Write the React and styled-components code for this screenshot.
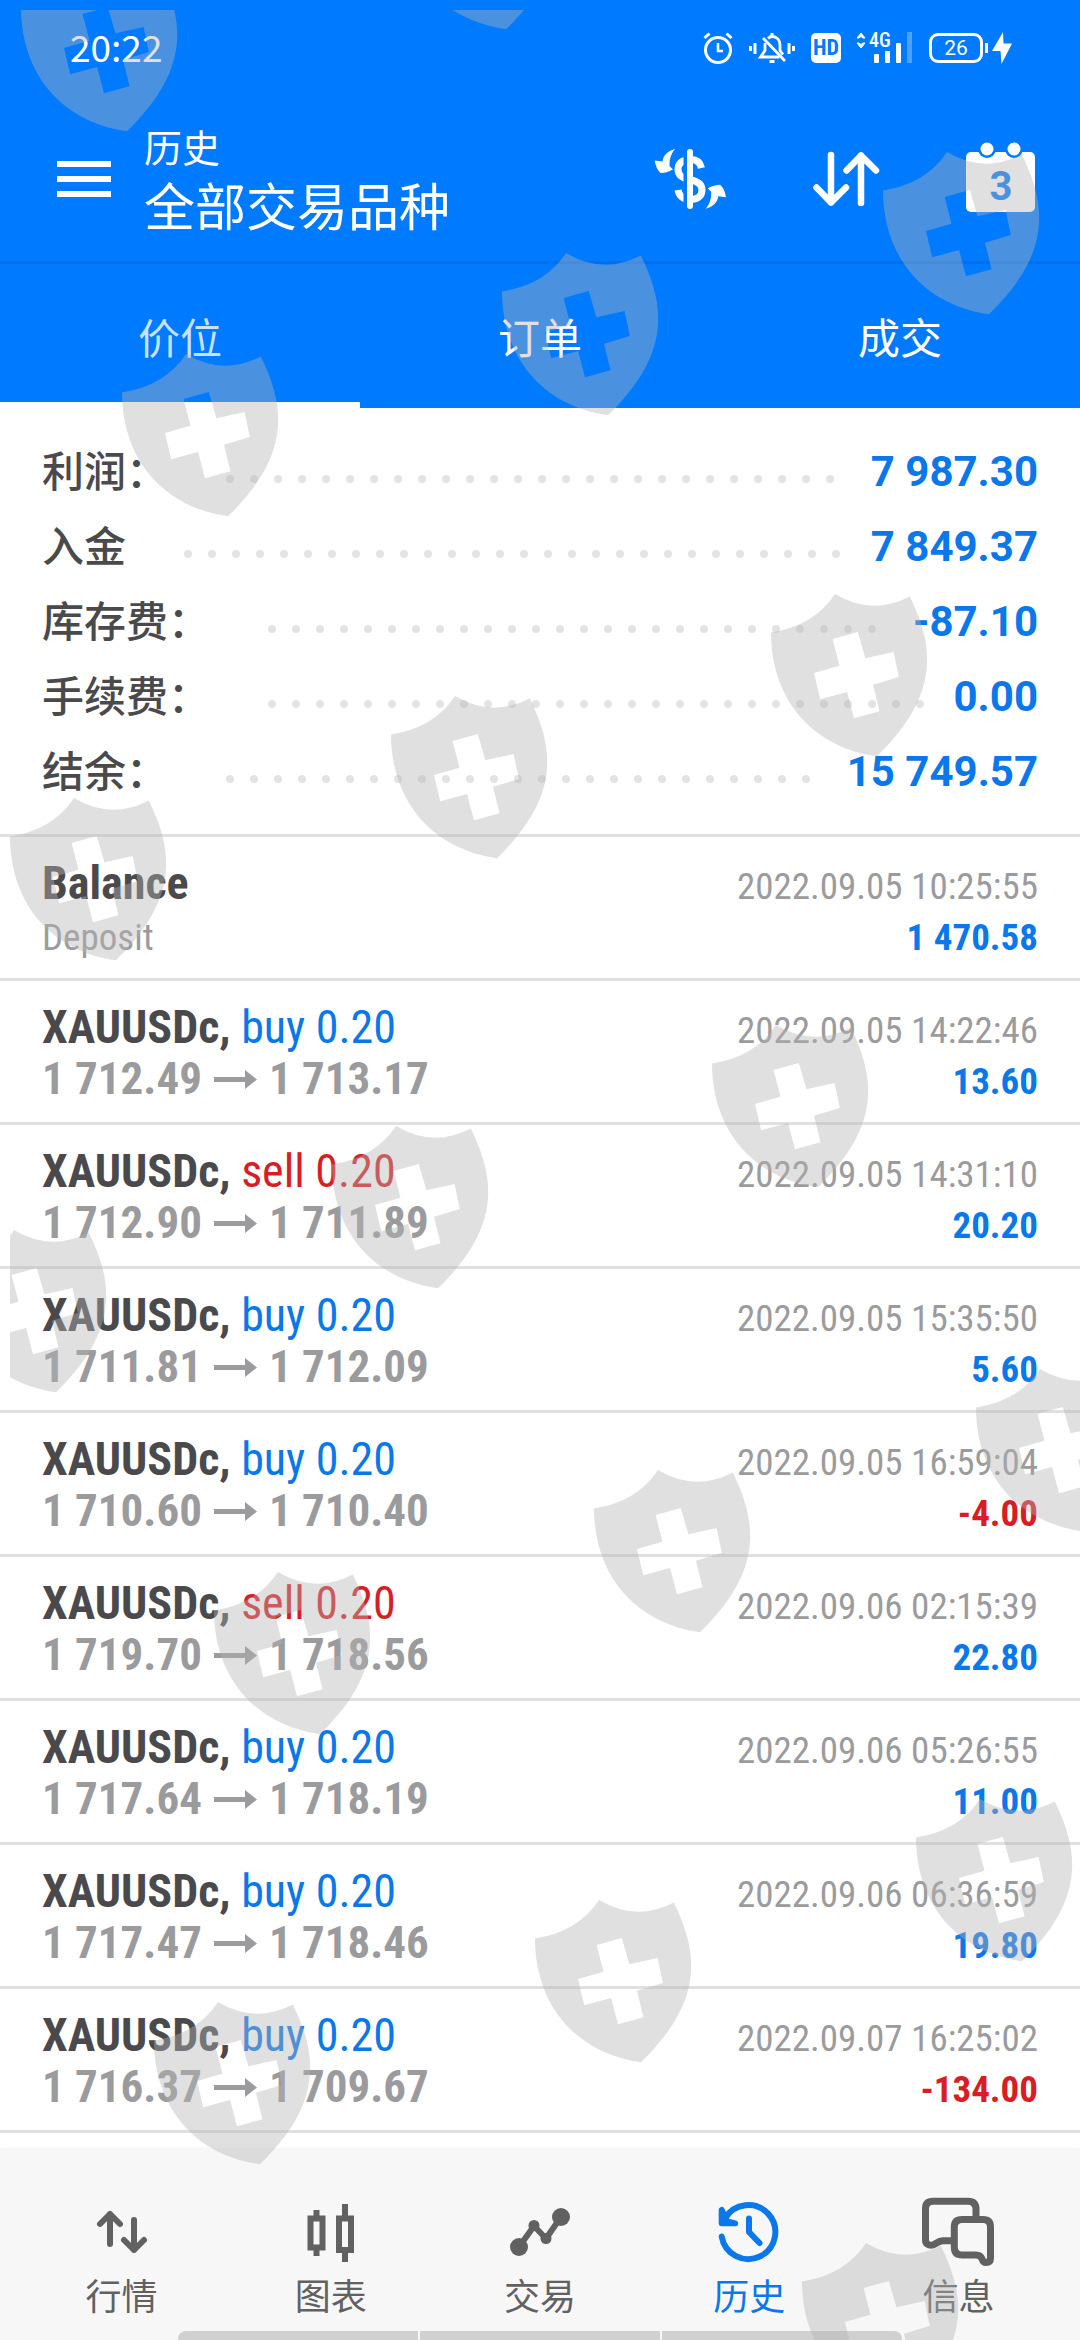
import React from "react";
import styled, { createGlobalStyle } from "styled-components";

const GlobalStyle = createGlobalStyle`
  * {
    box-sizing: border-box;
  }
  body {
    margin: 0;
    background: #ffffff;
    font-family: Roboto, "Noto Sans CJK SC", sans-serif;
  }
  button {
    padding: 0;
    border: none;
    background: none;
    font-family: inherit;
    color: inherit;
    cursor: pointer;
  }
  h1, p, ul, dl, dt, dd {
    margin: 0;
    padding: 0;
  }
  svg {
    display: block;
    overflow: visible;
  }
`;

const Page = styled.div`
  position: relative;
  display: flex;
  flex-direction: column;
  min-height: 100vh;
  overflow: hidden;
`;

const Header = styled.header`
  background: #007aff;
  color: #ffffff;
`;

const StatusBar = styled.div`
  display: flex;
  align-items: center;
  gap: 16px;
  height: 96px;
  padding: 0 68px 0 70px;
`;

const Clock = styled.span`
  flex: 1;
  padding-bottom: 5px;
  font-family: "Noto Sans CJK SC", sans-serif;
  font-size: 37px;
  line-height: 48px;
`;

const HdBadge = styled.span`
  width: 30px;
  height: 30px;
  border-radius: 5px;
  background: #ffffff;
  color: #007aff;
  font-family: "Roboto Condensed", "Liberation Sans Narrow", Roboto, sans-serif;
  font-size: 22px;
  font-weight: bold;
  line-height: 30px;
  text-align: center;
`;

const BatteryGroup = styled.span`
  display: flex;
  align-items: center;
  gap: 2px;
`;

const Battery = styled.span`
  width: 54px;
  height: 30px;
  border: 3px solid #ffffff;
  border-radius: 9px;
  font-size: 21px;
  line-height: 25px;
  text-align: center;
`;

const BatteryTip = styled.span`
  width: 3px;
  height: 10px;
  margin-right: 2px;
  background: #ffffff;
`;

const Toolbar = styled.div`
  display: flex;
  align-items: center;
  height: 168px;
  padding: 0 42px 0 57px;
  border-bottom: 3px solid #006fee;
`;

const Titles = styled.div`
  flex: 1;
  margin-left: 33px;
`;

const Subtitle = styled.p`
  font-size: 38px;
  line-height: 60px;
`;

const Title = styled.h1`
  font-size: 51px;
  font-weight: normal;
  line-height: 60px;
`;

const Actions = styled.div`
  display: flex;
  gap: 84px;
`;

const Tabs = styled.div`
  display: flex;
`;

const Tab = styled.button`
  flex: 1;
  height: 144px;
  padding-top: 14px;
  border-bottom: 6px solid ${(props) => (props.$active ? "#ffffff" : "#007aff")};
  font-size: 42px;
  line-height: 60px;
  color: ${(props) => (props.$active ? "rgba(255, 255, 255, 0.78)" : "#ffffff")};
`;

const Summary = styled.dl`
  padding: 26px 42px 25px;
  border-bottom: 3px solid #e0e0e0;
`;

const SummaryRow = styled.div`
  display: flex;
  align-items: center;
  height: 75px;
  font-size: 42px;
`;

const SummaryLabel = styled.dt`
  padding-bottom: 6px;
  font-weight: 500;
  color: #4a4a4d;
`;

const Leader = styled.span`
  display: flex;
  flex: 1;
  flex-wrap: wrap;
  gap: 16px;
  height: 8px;
  margin: 15px 24px 0 58px;
  overflow: hidden;
`;

const Dot = styled.span`
  width: 8px;
  height: 8px;
  border-radius: 50%;
  background: #e3e3e3;
`;

const SummaryValue = styled.dd`
  font-weight: bold;
  color: #0a78ea;
`;

const DealList = styled.ul`
  flex: 1;
  list-style: none;
`;

const Deal = styled.li`
  padding: 21px 42px 18px;
  border-bottom: 3px solid #e0e0e0;
  font-family: "Roboto Condensed", "Liberation Sans Narrow", Roboto, sans-serif;
  font-size: 46px;
  line-height: 51px;
`;

/* the empty ::before keeps one baseline for rows with small text only */
const Line = styled.div`
  display: flex;
  align-items: baseline;
  height: 51px;
  &::before {
    content: "\\200b";
    width: 0;
  }
  > :last-child {
    margin-left: auto;
  }
`;

const Symbol = styled.span`
  font-weight: bold;
  color: #4a4a4d;
`;

const Side = styled.span`
  color: ${(props) => (props.$side === "sell" ? "#d81e24" : "#0a78ea")};
`;

const Prices = styled.span`
  display: flex;
  align-items: baseline;
  gap: 12px;
  font-size: 45px;
  font-weight: bold;
  color: #9b9b9e;
`;

const Note = styled.span`
  font-size: 37px;
  color: #9b9b9e;
`;

const Profit = styled.span`
  font-size: 37px;
  font-weight: bold;
  color: ${(props) => (props.$loss ? "#d81e24" : "#0a78ea")};
`;

const Nav = styled.nav`
  background: #f7f7f7;
  box-shadow: 0 0 6px #f7f7f7;
`;

const NavItems = styled.div`
  display: flex;
  justify-content: space-around;
  padding: 48px 17px 0;
`;

const NavItem = styled.button`
  display: flex;
  flex: 1;
  flex-direction: column;
  align-items: center;
  font-size: 36px;
  line-height: 60px;
  color: ${(props) => (props.$active ? "#0a78ea" : "#616161")};
`;

const GestureBar = styled.div`
  display: flex;
  gap: 2px;
  width: 67%;
  height: 9px;
  margin: 3px auto 0;
  border-radius: 8px 8px 0 0;
  overflow: hidden;
`;

const GesturePart = styled.span`
  flex: 1;
  background: #d0d0d0;
`;

const Overlay = styled.div`
  position: absolute;
  inset: 10px 0 0 10px;
  overflow: hidden;
  pointer-events: none;
`;

const summary = [
  { label: "利润：", value: "7 987.30" },
  { label: "入金", value: "7 849.37" },
  { label: "库存费：", value: "-87.10" },
  { label: "手续费：", value: "0.00" },
  { label: "结余：", value: "15 749.57" },
];

const deals = [
  { side: "buy", open: "1 712.49", close: "1 713.17", time: "2022.09.05 14:22:46", profit: "13.60" },
  { side: "sell", open: "1 712.90", close: "1 711.89", time: "2022.09.05 14:31:10", profit: "20.20" },
  { side: "buy", open: "1 711.81", close: "1 712.09", time: "2022.09.05 15:35:50", profit: "5.60" },
  { side: "buy", open: "1 710.60", close: "1 710.40", time: "2022.09.05 16:59:04", profit: "-4.00" },
  { side: "sell", open: "1 719.70", close: "1 718.56", time: "2022.09.06 02:15:39", profit: "22.80" },
  { side: "buy", open: "1 717.64", close: "1 718.19", time: "2022.09.06 05:26:55", profit: "11.00" },
  { side: "buy", open: "1 717.47", close: "1 718.46", time: "2022.09.06 06:36:59", profit: "19.80" },
  { side: "buy", open: "1 716.37", close: "1 709.67", time: "2022.09.07 16:25:02", profit: "-134.00" },
];

const shields = [
  [21, -31],
  [400, -133],
  [883, 152],
  [502, 253],
  [122, 354],
  [771, 594],
  [391, 696],
  [10, 798],
  [712, 1025],
  [332, 1126],
  [-50, 1230],
  [976, 1369],
  [594, 1470],
  [214, 1572],
  [916, 1799],
  [535, 1900],
  [154, 2002],
  [802, 2243],
];

const AlarmIcon = () => (
  <svg width="30" height="32" viewBox="0 0 30 32" fill="none" stroke="#fff" strokeWidth="3">
    <circle cx="15" cy="18" r="12.5" />
    <path d="M15 11v8h5" strokeWidth="2.6" />
    <path d="M1.5 6l5-4.5M28.5 6l-5-4.5" />
  </svg>
);

const MutedBellIcon = () => (
  <svg width="46" height="32" viewBox="0 0 46 32" fill="none" stroke="#fff" strokeWidth="2.8">
    <path d="M1.5 14v5M6 11v11M40 11v11M44.5 14v5" strokeWidth="3" />
    <path d="M19 6.5C20.5 5 22 4.5 23 4.5c5 0 8 3.5 8 8.5v5.5l3 4" />
    <path d="M16 11v7.5L11.5 25h19" />
    <path d="M14 6l22 23" />
    <path d="M23 1v3M20.5 29.5h5" strokeWidth="3" />
  </svg>
);

const SignalIcon = () => (
  <svg width="56" height="32" viewBox="0 0 56 32" fill="#fff">
    <path d="M4 1l4 5H6L4 4.5 2 6H0zM4 16l4-5H6l-2 1.5L2 11H0z" stroke="#fff" />
    <text x="12" y="15" fontSize="20" fontWeight="500" fontFamily="Roboto Condensed, Liberation Sans Narrow, Roboto, sans-serif">
      4G
    </text>
    <rect x="17" y="22" width="5" height="9" rx="1" />
    <rect x="28" y="19" width="5" height="12" rx="1" />
    <rect x="39" y="11" width="5" height="20" rx="1" />
    <rect x="50" y="0" width="5" height="31" opacity="0.3" />
  </svg>
);

const BoltIcon = () => (
  <svg width="20" height="32" viewBox="0 0 20 32" fill="#fff">
    <path d="M11 0L0 19h8.5l1 13L20 11.5h-8.5z" />
  </svg>
);

const MenuIcon = () => (
  <svg width="54" height="36" viewBox="0 0 54 36" fill="#fff">
    <path d="M0 0h54v6H0zM0 15h54v6H0zM0 30h54v6H0z" />
  </svg>
);

const CurrencyIcon = () => (
  <svg width="72" height="72" viewBox="0 0 72 72" fill="none">
    <path
      d="M47.5 25C46 18.5 42 16.5 37 16.5c-9 0-13 4-13 10 0 6.5 5 9 13 10.5 7.5 1.5 11 4.5 11 10 0 6-4.5 9.5-12 9.5-6.5 0-11-3.5-12-9.5"
      stroke="#fff"
      strokeWidth="7"
    />
    <path d="M31.5 8v54" stroke="#007aff" strokeWidth="4" />
    <path d="M36 9v54" stroke="#fff" strokeWidth="6" strokeLinecap="round" />
    <path id="swirl" d="M21 6C13 8 9 13 8.5 18.5L.7 17.5Q2 26 6.5 30q6 0 12.5-3.5L15.5 23Q15 13 21 6z" fill="#fff" />
    <use href="#swirl" transform="rotate(180 36.35 35.85)" />
  </svg>
);

const SortIcon = () => (
  <svg width="72" height="72" viewBox="0 0 72 72" fill="none" stroke="#fff" strokeWidth="6.5" strokeLinecap="round" strokeLinejoin="round">
    <path d="M21 12v47.5M6.5 44.5l14.5 15 15-15" />
    <path d="M51 60V12.5M36.5 27.5l14.5-15 15 15" />
  </svg>
);

const CalendarIcon = () => (
  <svg width="72" height="72" viewBox="0 0 72 72">
    <rect x="0" y="9" width="69" height="60" rx="5" fill="#fff" />
    <circle cx="21" cy="6" r="9" fill="#007aff" />
    <circle cx="48" cy="6" r="9" fill="#007aff" />
    <circle cx="21" cy="6" r="6.5" fill="#fff" />
    <circle cx="48" cy="6" r="6.5" fill="#fff" />
    <text x="35" y="57" textAnchor="middle" fontSize="40" fontWeight="bold" fontFamily="Roboto, sans-serif" fill="#007aff">
      3
    </text>
  </svg>
);

const PriceArrow = () => (
  <svg width="43" height="24" viewBox="0 0 43 24" fill="currentColor">
    <path d="M0 7h31V0l12 9.500-12 9.500v-7H0z" />
  </svg>
);

const NavIcon = ({ children }) => (
  <svg
    width="72"
    height="72"
    viewBox="0 0 72 72"
    fill="none"
    stroke="currentColor"
    strokeWidth="6"
    strokeLinecap="round"
    strokeLinejoin="round"
  >
    {children}
  </svg>
);

const navItems = [
  {
    label: "行情",
    icon: (
      <NavIcon>
        <path d="M24 18v30M14 28l10-10 10 10" />
        <path d="M48 24v30M38 44l10 10 10-10" />
      </NavIcon>
    ),
  },
  {
    label: "图表",
    icon: (
      <NavIcon>
        <g strokeLinecap="butt" strokeLinejoin="miter">
          <path d="M15.5 22.5h12v29h-12zM44 22.5h12V54H44z" />
          <path d="M21.5 14v7M21.5 53v7M50 8v13M50 56v10" />
        </g>
      </NavIcon>
    ),
  },
  {
    label: "交易",
    icon: (
      <NavIcon>
        <path d="M15 51l15-21 12 12.5L57 21" />
        <g fill="currentColor" stroke="none">
          <circle cx="15" cy="51" r="9" />
          <circle cx="30" cy="29.5" r="5.5" />
          <circle cx="42" cy="42.5" r="5.5" />
          <circle cx="57" cy="21" r="9" />
        </g>
      </NavIcon>
    ),
  },
  {
    label: "历史",
    active: true,
    icon: (
      <NavIcon>
        <path d="M8.7 40.5A27 27 0 1 0 12 22.5" />
        <path d="M8.7 14v13.3h13.5l-8-2z" fill="currentColor" />
        <path d="M36 22.5V36l10.5 11" />
      </NavIcon>
    ),
  },
  {
    label: "信息",
    icon: (
      <NavIcon>
        <g strokeWidth="7">
          <path strokeLinecap="butt" d="M31 44.7H21c-6 0-7 4.5-11.5 4.5-3.5 0-6-1.7-6-5V12.5Q3.5 5.2 11 5.2h35q8 0 8 8V22" />
          <path d="M40 23.5h21q7.5 0 7.5 7.5v31q0 4.5-4.5 4.5-2.8 0-4-3.7Q58.5 59 54 59H40q-7.7 0-7.7-7.7V31q0-7.5 7.7-7.5z" />
        </g>
      </NavIcon>
    ),
  },
];

const Watermark = () => (
  <Overlay aria-hidden="true">
    <svg width="100%" height="100%">
      <defs>
        <path
          id="shield"
          fillRule="evenodd"
          d="M0 38.4Q43 32 64 0 101 22 138.8 2.4C163 52 170 100 106 162.3 36 152 0 100 0 38.4zM61.6 45l25.2-7 7.6 26.3 28.2-6.3 5.2 25L102 90.7l6.5 26.6-25.5 7-6.9-26.3-26.9 7.3L43 79l25.5-7.3z"
        />
      </defs>
      <g fill="#b4b4b4" fillOpacity="0.41" transform="translate(-10 -10)">
        {shields.map(([x, y]) => (
          <use key={`${x},${y}`} href="#shield" x={x} y={y} />
        ))}
      </g>
    </svg>
  </Overlay>
);

const App = () => {
  return (
    <Page>
      <GlobalStyle />
      <Header>
        <StatusBar>
          <Clock>20:22</Clock>
          <AlarmIcon />
          <MutedBellIcon />
          <HdBadge>HD</HdBadge>
          <SignalIcon />
          <BatteryGroup>
            <Battery>26</Battery>
            <BatteryTip />
            <BoltIcon />
          </BatteryGroup>
        </StatusBar>
        <Toolbar>
          <button aria-label="菜单">
            <MenuIcon />
          </button>
          <Titles>
            <Subtitle>历史</Subtitle>
            <Title>全部交易品种</Title>
          </Titles>
          <Actions>
            <button aria-label="货币">
              <CurrencyIcon />
            </button>
            <button aria-label="排序">
              <SortIcon />
            </button>
            <button aria-label="日期">
              <CalendarIcon />
            </button>
          </Actions>
        </Toolbar>
        <Tabs role="tablist">
          <Tab role="tab" aria-selected="true" $active>
            价位
          </Tab>
          <Tab role="tab" aria-selected="false">
            订单
          </Tab>
          <Tab role="tab" aria-selected="false">
            成交
          </Tab>
        </Tabs>
      </Header>
      <Summary>
        {summary.map(({ label, value }) => (
          <SummaryRow key={label}>
            <SummaryLabel>{label}</SummaryLabel>
            <Leader>
              {Array.from({ length: 80 }, (_, i) => (
                <Dot key={i} />
              ))}
            </Leader>
            <SummaryValue>{value}</SummaryValue>
          </SummaryRow>
        ))}
      </Summary>
      <DealList>
        <Deal>
          <Line>
            <Symbol>Balance</Symbol>
            <Note>2022.09.05 10:25:55</Note>
          </Line>
          <Line>
            <Note>Deposit</Note>
            <Profit>1 470.58</Profit>
          </Line>
        </Deal>
        {deals.map(({ side, open, close, time, profit }) => (
          <Deal key={time}>
            <Line>
              <span>
                <Symbol>XAUUSDc,</Symbol> <Side $side={side}>{side} 0.20</Side>
              </span>
              <Note>{time}</Note>
            </Line>
            <Line>
              <Prices>
                {open}
                <PriceArrow />
                {close}
              </Prices>
              <Profit $loss={profit.startsWith("-")}>{profit}</Profit>
            </Line>
          </Deal>
        ))}
      </DealList>
      <Nav>
        <NavItems>
          {navItems.map(({ label, icon, active }) => (
            <NavItem key={label} $active={active}>
              {icon}
              {label}
            </NavItem>
          ))}
        </NavItems>
        <GestureBar>
          <GesturePart />
          <GesturePart />
          <GesturePart />
        </GestureBar>
      </Nav>
      <Watermark />
    </Page>
  );
};

export default App;
